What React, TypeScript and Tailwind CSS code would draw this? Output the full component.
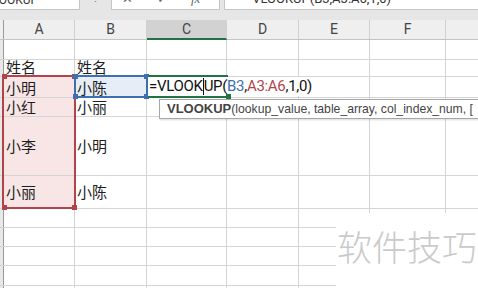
import React from 'react';

const colW = ['w-[71px]', 'w-[72px]', 'w-[80px]', 'w-[72px]', 'w-[71px]', 'w-[76px]'];
const letters = ['A', 'B', 'C', 'D', 'E', 'F'];

type Row = { h: string; a?: string; b?: string; align: string; active?: boolean; redA?: boolean; blueB?: boolean };

const rows: Row[] = [
  { h: 'h-[20px]', align: 'items-end' },
  { h: 'h-[17px]', a: '姓名', b: '姓名', align: 'items-end' },
  { h: 'h-[21px]', a: '小明', b: '小陈', align: 'items-end', active: true, redA: true, blueB: true },
  { h: 'h-[19px]', a: '小红', b: '小丽', align: 'items-end', redA: true },
  { h: 'h-[59px]', a: '小李', b: '小明', align: 'items-center', redA: true },
  { h: 'h-[33px]', a: '小丽', b: '小陈', align: 'items-center', redA: true },
  { h: 'h-[19px]', align: 'items-end' },
  { h: 'h-[19px]', align: 'items-end' },
  { h: 'h-[19px]', align: 'items-end' },
  { h: 'h-[20px]', align: 'items-end' },
  { h: 'h-[19px]', align: 'items-end' },
];

const cjk = "font-['Noto_Sans_CJK_SC',sans-serif]";

function TopBar() {
  // only the lower edge of the name box / formula bar is in view
  return (
    <div className="flex h-[10px] bg-[#e6e6e6] text-[#333]">
      <div className="w-[80px] bg-white border-r border-b border-[#c6c6c6] overflow-hidden">
        <div className="-mt-[7px] -ml-[15px] text-[12px] leading-[14px] whitespace-nowrap">VLOOKUP</div>
      </div>
      <div className="w-[31px] flex justify-center overflow-hidden">
        <div className="-mt-[8px] text-[11px] leading-[14px] text-[#888]">⋮</div>
      </div>
      <div className="w-[109px] bg-white border border-t-0 border-[#c6c6c6] overflow-hidden flex text-[#666]">
        <div className="-mt-[8px] ml-[10px] text-[13px] leading-[14px]">✕</div>
        <div className="-mt-[8px] ml-[24px] text-[13px] leading-[14px]">✓</div>
        <div className="-mt-[8px] ml-[23px] text-[13px] leading-[14px] italic font-['Liberation_Serif',serif]">fx</div>
      </div>
      <div className="w-[4px]" />
      <div className="flex-1 bg-white border-l border-b border-[#c6c6c6] overflow-hidden">
        <div className="-mt-[8px] ml-[20px] text-[13px] leading-[14px] whitespace-nowrap">=VLOOKUP(B3,A3:A6,1,0)</div>
      </div>
    </div>
  );
}

function HeaderRow() {
  return (
    <div className="flex h-[20px] bg-[#efefef] border-b border-[#c4c4c4] text-[14px] text-[#444]">
      <div className="w-[4px] border-r border-[#9a9a9a]" />
      {letters.map((l, i) => (
        <div
          key={l}
          className={`${colW[i]} border-r border-[#d0d0d0] flex items-center justify-center ${
            l === 'C' ? 'bg-[#d2d2d2] border-b-2 border-b-[#217346] -mb-[1px] pt-[1px]' : ''
          }`}
        >
          {l}
        </div>
      ))}
      <div className="flex-1" />
    </div>
  );
}

function GridRow({ r }: { r: Row }) {
  const pad = r.align === 'items-end' ? 'pb-[1px]' : '';
  return (
    <div className={`flex ${r.h} border-b border-[#d4d4d4] text-[15px] text-[#1e1e1e] ${cjk}`}>
      <div className={`w-[4px] bg-[#e8e8e8] border-r border-[#9a9a9a] ${r.active ? 'border-r-2 border-r-[#217346]' : ''}`} />
      <div className={`${colW[0]} border-r border-[#d4d4d4] flex ${r.align} ${pad} pl-[2px] leading-[16px] ${r.redA ? 'bg-[#f8e6e6]' : ''}`}>
        {r.a}
      </div>
      <div className={`${colW[1]} border-r border-[#d4d4d4] flex ${r.align} ${pad} pl-[2px] leading-[16px] ${r.blueB ? 'bg-[#e6edf7]' : ''}`}>
        {r.b}
      </div>
      {colW.slice(2).map((w, i) => (
        <div key={i} className={`${w} border-r border-[#d4d4d4]`} />
      ))}
      <div className="flex-1" />
    </div>
  );
}

function Handle({ pos, color }: { pos: string; color: string }) {
  return <div className={`absolute w-[5px] h-[5px] ${pos} ${color}`} />;
}

export default function App() {
  return (
    <div className="relative w-[478px] h-[288px] overflow-hidden bg-white font-['Roboto',sans-serif]">
      <TopBar />
      <div className="h-[10px] bg-[#e6e6e6]" />
      <HeaderRow />
      {rows.map((r, i) => (
        <GridRow key={i} r={r} />
      ))}

      {/* reference range A3:A6 */}
      <div className="absolute left-[2px] top-[75px] w-[74px] h-[134px] border-2 border-[#b2434b]">
        <Handle pos="-left-[2px] -top-[3px]" color="bg-[#b2434b]" />
        <Handle pos="-right-[3px] -top-[3px]" color="bg-[#b2434b]" />
        <Handle pos="-left-[2px] -bottom-[3px]" color="bg-[#b2434b]" />
        <Handle pos="-right-[3px] -bottom-[3px]" color="bg-[#b2434b]" />
      </div>

      {/* reference B3 */}
      <div className="absolute left-[74px] top-[75px] w-[74px] h-[23px] border-2 border-[#3e6fb0]">
        <Handle pos="-left-[3px] -top-[3px]" color="bg-[#3e6fb0]" />
        <Handle pos="-right-[3px] -top-[3px]" color="bg-[#3e6fb0]" />
        <Handle pos="-left-[3px] -bottom-[3px]" color="bg-[#3e6fb0]" />
        <Handle pos="-right-[3px] -bottom-[3px]" color="bg-[#3e6fb0]" />
      </div>

      {/* editing cell C3 */}
      <div className="absolute left-[148px] top-[77px] w-[168px] h-[19px] bg-white flex items-center pl-[1px] text-[15px] tracking-[-0.3px] text-[#111] whitespace-nowrap">
        <span>=VLOOK</span>
        <span className="inline-block w-[1px] h-[17px] bg-[#111]" />
        <span>UP(</span>
        <span className="text-[#3e6fb0]">B3</span>
        <span>,</span>
        <span className="text-[#b2434b]">A3:A6</span>
        <span>,1,0)</span>
      </div>
      <div className="absolute left-[148px] top-[75px] w-[80px] h-[23px] border-y-2 border-[#217346]">
        <Handle pos="-right-[3px] -bottom-[3px]" color="bg-[#217346]" />
      </div>

      {/* function tooltip */}
      <div className="absolute left-[159px] top-[99px] w-[340px] h-[20px] bg-white border border-[#a6a6a6] shadow-[1px_1px_2px_rgba(0,0,0,0.15)] flex items-center pl-[7px] text-[#444] whitespace-nowrap font-['Liberation_Sans',sans-serif]">
        <span className="font-bold text-[13px]">VLOOKUP</span>
        <span className="text-[12.2px]">(lookup_value, table_array, col_index_num, [</span>
      </div>

      {/* watermark */}
      <div className="absolute left-[336px] top-[213px] right-0 bottom-0 bg-white flex items-start">
        <span className={`mt-[12px] ml-[1px] text-[35px] leading-[42px] font-light text-[#cacaca] whitespace-nowrap ${cjk}`}>
          软件技巧
        </span>
      </div>
    </div>
  );
}
